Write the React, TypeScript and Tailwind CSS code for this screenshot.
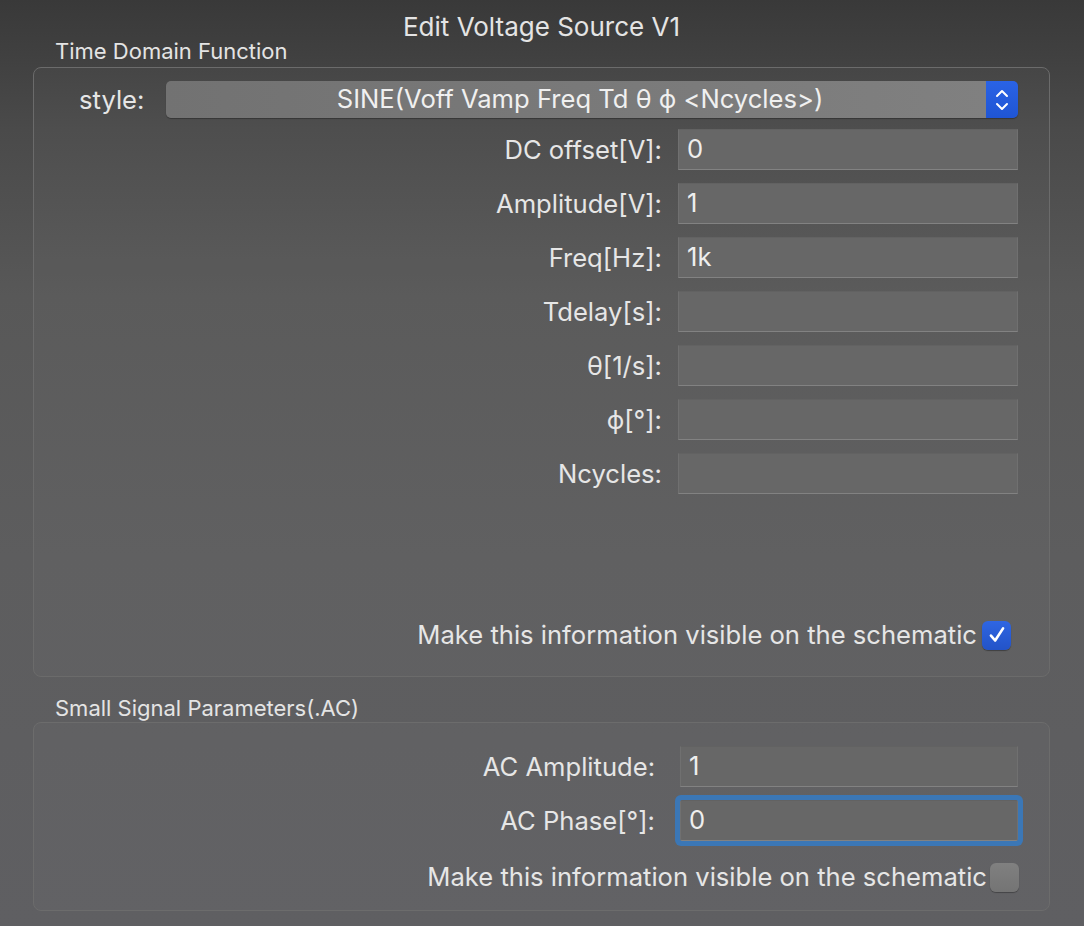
import React from 'react';

const font = { fontFamily: 'Inter, "Liberation Sans", sans-serif' };

function Field({ label, value, focused = false, gap = 'gap-[16px]', width = 'w-[340px]' }: { label: string; value?: string; focused?: boolean; gap?: string; width?: string }) {
  return (
    <div className={`flex items-center justify-end ${gap}`}>
      <span className="text-[25.6px] leading-[30px] text-[#e6e6e6]">{label}</span>
      <div
        className={`${width} h-[41px] flex items-center px-[8px] bg-[#676767] border border-[#707070] border-t-[#626262] border-b-[#828282] text-[25.6px] text-[#eeeeee] ${
          focused ? 'rounded-[2px] shadow-[0_0_0_5px_#3b77b6]' : ''
        }`}
      >
        {value}
      </div>
    </div>
  );
}

function Checkbox({ checked }: { checked: boolean }) {
  if (checked) {
    return (
      <div className="w-[29px] h-[29px] rounded-[6px] bg-gradient-to-b from-[#2f66e2] to-[#2353c8] shadow-[0_1px_1px_rgba(0,0,0,0.35)] flex items-center justify-center">
        <svg width="22" height="22" viewBox="0 0 20 20" fill="none">
          <path d="M4.5 10.5 L8.3 15 L15.5 4" stroke="white" strokeWidth="2.4" strokeLinecap="round" strokeLinejoin="round" />
        </svg>
      </div>
    );
  }
  return <div className="w-[29px] h-[29px] rounded-[6px] bg-gradient-to-b from-[#808080] to-[#747474] shadow-[0_1px_1px_rgba(0,0,0,0.3)]" />;
}

export default function App() {
  return (
    <div
      style={font}
      className="w-full h-[926px] overflow-hidden pl-[33px] pr-[34px] bg-[linear-gradient(180deg,#393939_0%,#4a4a4a_14%,#585858_32%,#5d5d5e_60%,#5f5f62_100%)]"
    >
      <div className="h-[39px] pt-[12px] text-center text-[26px] leading-[30px] text-[#e4e4e4]">Edit Voltage Source V1</div>
      <div className="h-[28px] pl-[22px] text-[22px] leading-[24px] text-[#e4e4e4]">Time Domain Function</div>

      {/* time domain group */}
      <div className="h-[610px] flex flex-col rounded-[8px] border border-[#6b6b6b] bg-[rgba(255,255,255,0.025)] pt-[13px] pr-[31px]">
        <div className="flex items-center pl-[45px]">
          <span className="w-[87px] text-[25.6px] leading-[30px] text-[#e6e6e6]">style:</span>
          <div className="flex-1 h-[37px] flex rounded-[5px] overflow-hidden shadow-[0_1px_1px_rgba(0,0,0,0.3)]">
            <div className="flex-1 flex items-center justify-center pl-[8px] bg-gradient-to-r from-[#727272] to-[#808080] text-[25.6px] text-[#f0f0f0]">
              SINE(Voff Vamp Freq Td θ ϕ &lt;Ncycles&gt;)
            </div>
            <div className="w-[32px] flex items-center justify-center bg-gradient-to-b from-[#2a63e6] to-[#1f55d4]">
              <svg width="16" height="26" viewBox="0 0 16 26" fill="none">
                <path d="M3 9 L8 4 L13 9" stroke="white" strokeWidth="2" strokeLinecap="round" strokeLinejoin="round" />
                <path d="M3 17 L8 22 L13 17" stroke="white" strokeWidth="2" strokeLinecap="round" strokeLinejoin="round" />
              </svg>
            </div>
          </div>
        </div>

        <div className="mt-[11px] flex flex-col gap-[13px]">
          <Field label="DC offset[V]:" value="0" />
          <Field label="Amplitude[V]:" value="1" />
          <Field label="Freq[Hz]:" value="1k" />
          <Field label="Tdelay[s]:" />
          <Field label="θ[1/s]:" />
          <Field label="ϕ[°]:" />
          <Field label="Ncycles:" />
        </div>

        <div className="mt-auto mb-[26px] mr-[7px] flex items-center justify-end gap-[5px]">
          <span className="text-[25.6px] leading-[30px] text-[#e6e6e6]">Make this information visible on the schematic</span>
          <Checkbox checked />
        </div>
      </div>

      <div className="h-[45px] pt-[19px] pl-[22px] text-[22px] leading-[24px] text-[#e4e4e4]">Small Signal Parameters(.AC)</div>

      {/* small signal group */}
      <div className="h-[189px] flex flex-col rounded-[8px] border border-[#6c6c6c] bg-[rgba(255,255,255,0.02)] pt-[23px] pr-[30px]">
        <div className="flex flex-col gap-[13px] pr-[1px]">
          <Field label="AC Amplitude:" value="1" gap="gap-[25px]" width="w-[338px]" />
          <Field label="AC Phase[°]:" value="0" gap="gap-[25px]" width="w-[338px]" focused />
        </div>
        <div className="mt-auto mb-[18px] flex items-center justify-end gap-[3px]">
          <span className="text-[25.6px] leading-[30px] text-[#e6e6e6]">Make this information visible on the schematic</span>
          <Checkbox checked={false} />
        </div>
      </div>
    </div>
  );
}
